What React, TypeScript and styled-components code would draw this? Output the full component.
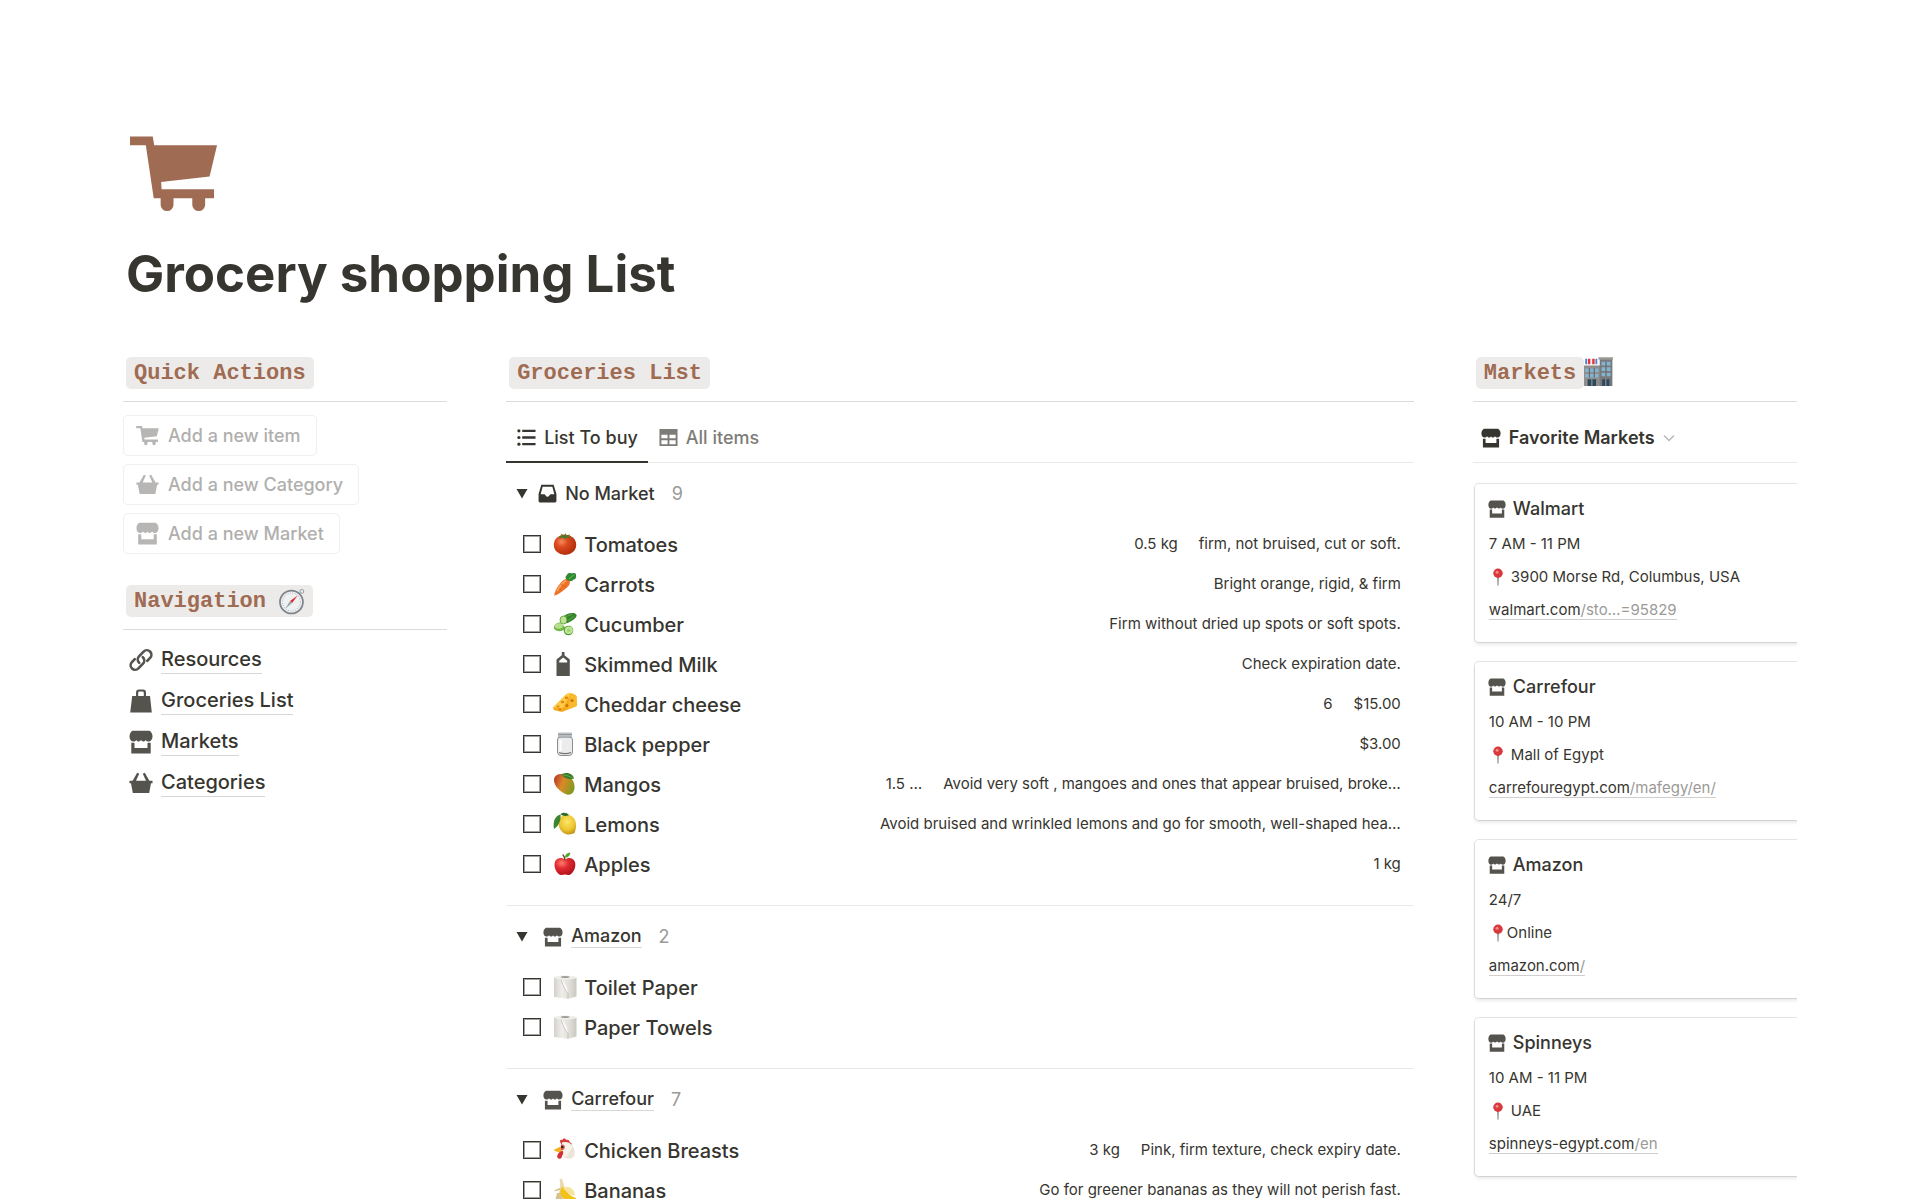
import React from 'react';
import styled, { createGlobalStyle } from 'styled-components';

const ink = '#37352f';
const iconInk = '#55534e';
const muted = '#9b9a97';
const faded = '#b7b6b4';

const GlobalStyle = createGlobalStyle`
  * { box-sizing: border-box; }
  html, body { margin: 0; background: #fff; }
  html { height: 100%; overflow: hidden; }
  body {
    color: ${ink};
    font-family: Inter, "Liberation Sans", sans-serif;
    font-size: 16px;
  }
  h1, h2, h3, p, ul { margin: 0; padding: 0; }
  ul { list-style: none; }
  svg { display: block; flex: none; }
`;

/* ---------- solid icons ---------- */

type IconProps = { size: number; color?: string };

const CartIcon = ({ size, color = iconInk }: IconProps) => (
  <svg width={size} height={size} viewBox="0 0 90 90" fill={color} aria-hidden="true">
    <path d="M1 7.500h23l1.500 9H89l-7.500 31.500-49 5.500.5 7.500h53v9H25l-8-53.500H1z" />
    <path d="M32 68h13v8.500a6.500 6.500 0 0 1-13 0zM64 68h13v8.500a6.500 6.500 0 0 1-13 0z" />
  </svg>
);

const BasketIcon = ({ size, color = iconInk }: IconProps) => (
  <svg width={size} height={size} viewBox="0 0 24 24" fill={color} aria-hidden="true">
    <path d="M.5 9.800h3.100L8.200 1.800l2 .9-3.200 7.100h10l-3.200-7.100 2-.9 4.600 8h3.100v2.500h-1.500L20.200 22H3.800L2 12.300H.5z" />
  </svg>
);

const StoreIcon = ({ size, color = iconInk }: IconProps) => (
  <svg width={size} height={size} viewBox="0 0 24 24" fill={color} aria-hidden="true">
    <path d="M3.500.8h17c2 1.300 3 3.300 3 5.700 0 2.900-1.600 5-3.900 5-1.300 0-2.300-.7-2.800-1.600-.5.800-1.400 1.500-2.500 1.500s-1.900-.7-2.300-1.600c-.4.900-1.200 1.600-2.300 1.600s-2-.7-2.500-1.500c-.5.900-1.500 1.600-2.800 1.600C2 11.500.5 9.400.5 6.500c0-2.400 1-4.400 3-5.700z" />
    <path d="M2.300 12.800h2.600c.4 0 .6.200.6.600V18h13v-4.600c0-.4.200-.6.600-.6h2.600v10.700H2.300z" />
  </svg>
);

const BagIcon = ({ size }: IconProps) => (
  <svg width={size} height={size} viewBox="0 0 24 24" fill={iconInk} aria-hidden="true">
    <path d="M7 7V3.500A3 3 0 0 1 10 .5h4a3 3 0 0 1 3 3V7h4l1.800 16.500H1.200L3.200 7zm2.200 0h5.600V4a1.400 1.400 0 0 0-1.400-1.400h-2.800A1.400 1.400 0 0 0 9.200 4z" />
  </svg>
);

const LinkIcon = ({ size }: IconProps) => (
  <svg
    width={size}
    height={size}
    viewBox="0 0 24 24"
    fill="none"
    stroke={iconInk}
    strokeWidth="2.600"
    strokeLinecap="round"
    aria-hidden="true"
  >
    <path d="M10.200 14.800a4.600 4.600 0 0 1-.2-6.500l4.600-4.700a4.500 4.500 0 0 1 6.500 6.300l-2.900 3" />
    <path d="M13.800 9.200a4.600 4.600 0 0 1 .2 6.500l-4.600 4.700a4.500 4.500 0 0 1-6.500-6.300l2.900-3" />
  </svg>
);

const ListIcon = ({ size, color }: IconProps) => (
  <svg width={size} height={size} viewBox="0 0 20 20" fill={color} aria-hidden="true">
    <circle cx="2" cy="3" r="1.700" />
    <circle cx="2" cy="10" r="1.700" />
    <circle cx="2" cy="17" r="1.700" />
    <path d="M5.500 1.800h14v2.400h-14zM5.500 8.800h14v2.400h-14zM5.500 15.800h14v2.400h-14z" />
  </svg>
);

const TableIcon = ({ size, color }: IconProps) => (
  <svg width={size} height={size} viewBox="0 0 20 20" fill={color} fillRule="evenodd" aria-hidden="true">
    <path d="M.5 1h19v18H.5zM2.500 7v3.800h6.500V7zM11 7v3.800h6.500V7zM2.500 12.800V17h6.500v-4.200zM11 12.800V17h6.500v-4.200z" />
  </svg>
);

const InboxIcon = ({ size }: IconProps) => (
  <svg width={size} height={size} viewBox="0 0 20 20" fill={ink} fillRule="evenodd" aria-hidden="true">
    <path d="M3.500.8h13l2.900 9.700V18a1.400 1.400 0 0 1-1.400 1.400H2A1.400 1.400 0 0 1 .6 18v-7.500zm1.400 2L2.800 10.800h3.800c.6 0 .9.300 1.100.9a2.400 2.400 0 0 0 4.600 0c.2-.6.500-.9 1.100-.9h3.800L15.100 2.800z" />
  </svg>
);

const Chevron = () => (
  <svg width="12" height="12" viewBox="0 0 12 12" fill="none" stroke="#b9b8b5" strokeWidth="1.500" aria-hidden="true">
    <path d="M1 3.500l5 5 5-5" />
  </svg>
);

const Triangle = () => (
  <svg width="12" height="10" viewBox="0 0 12 10" fill={ink} aria-hidden="true">
    <path d="M.5 0h11L6 9.500z" />
  </svg>
);

/* ---------- picture icons ---------- */

const art: Record<string, React.ReactNode> = {
  tomato: (
    <>
      <defs>
        <radialGradient id="tomato" cx=".35" cy=".35" r=".75">
          <stop offset="0" stopColor="#f58a5c" />
          <stop offset=".35" stopColor="#dd4a20" />
          <stop offset="1" stopColor="#a92a08" />
        </radialGradient>
      </defs>
      <ellipse cx="12" cy="12.800" rx="11.200" ry="10.200" fill="url(#tomato)" />
      <path d="M6 4l3.500.4L7.500 1.500l4 2L12.300.8l.9 2.900 4-1.500-1.900 2.500 2.500 1.500-4.300-.4-1.800 1.400-1.500-1.700-3.400.9z" fill="#4c7a28" />
    </>
  ),
  carrot: (
    <>
      <path d="M1.200 23.500C1.500 18 9 7 13.500 7S17.500 12 15 14.500C11 18.500 4 23.500 1.200 23.500z" fill="#ee722a" />
      <path d="M4 19c3-5 6-8.500 9-10.500" stroke="#f9a25a" strokeWidth="1.600" fill="none" />
      <path d="M8 12.500l2.500 1.500M6 17l2 1M11.500 14l1.500 1.500" stroke="#cc5717" strokeWidth=".8" />
      <path d="M14 8c-2-2-2-4 0-5 .5-2 3-2.500 4.500-1.500C21 .5 23.500 1 23 3.500c.7 2-.5 4-2.500 4-1 1.800-3 2-4.500 1.200z" fill="#2f8a33" />
      <path d="M16 7l5-4.500" stroke="#6dbb52" />
    </>
  ),
  cucumber: (
    <>
      <path d="M8.500 6C12 2 19 0 22 1.500s1.500 4-2 6.500-6 3.500-8.500 3S7 8 8.500 6z" fill="#35852a" />
      <path d="M13 4.500l6-2.200M15 8.500l6-4" stroke="#68b14b" strokeWidth=".8" />
      <ellipse cx="10.500" cy="8" rx="3.500" ry="4" fill="#bfe295" stroke="#4c9835" strokeWidth=".8" />
      <path d="M1 16.500c-1-3 3-6.500 6-6l6 5.500c-2 3-9 5-12 .5z" fill="#6fb84b" />
      <ellipse cx="5.800" cy="14" rx="4" ry="2.800" fill="#b6df88" />
      <circle cx="15.500" cy="18.500" r="4.800" fill="#4f9d38" />
      <ellipse cx="15.800" cy="18.300" rx="4" ry="3.800" fill="#c2e69a" />
      <circle cx="15.800" cy="18.300" r="1.900" fill="#a5d577" />
    </>
  ),
  milk: (
    <path
      fillRule="evenodd"
      fill={iconInk}
      d="M8.800 0h2.700v3.300l5.300 4.200V24H3.500V7.500l5.300-4.200zM6.200 10.500h8V8.700L10.200 5.600l-4 3.100z"
    />
  ),
  cheese: (
    <>
      <path d="M0 15.500L13.500 2c3.500-1.500 7.500-.5 10 2.300l.3 9.700L9 20 .8 18z" fill="#f7a91d" />
      <path d="M0 15.500L13.500 2c1.500-.6 3-.8 4.500-.6L10 16z" fill="#fdcb45" />
      <path d="M18 1.400c2.200.3 4.200 1.400 5.500 2.900l.3 9.700L14 18z" fill="#f9b92c" />
      <ellipse cx="13.500" cy="5.800" rx="1.700" ry="1.200" fill="#de8413" />
      <ellipse cx="9.500" cy="10" rx="1.700" ry="1.300" fill="#de8413" />
      <ellipse cx="5" cy="14.500" rx="1.500" ry=".9" fill="#de8413" />
      <circle cx="14" cy="13.500" r="1.500" fill="#d0720d" />
      <circle cx="19" cy="8.500" r="1.600" fill="#d0720d" />
      <circle cx="7" cy="17.500" r=".9" fill="#c9680b" />
    </>
  ),
  jar: (
    <>
      <rect x="4.500" y="4.500" width="15" height="19" rx="3.500" fill="#ececec" stroke="#8b8d8e" />
      <path d="M7.500 8v11" stroke="#fff" strokeWidth="2" />
      <path d="M6 20.500c3 1.500 9 1.500 12 0" stroke="#747677" fill="none" strokeWidth="1.200" />
      <rect x="5" y=".5" width="14" height="4.500" rx="1" fill="#b9bfc3" />
      <path d="M5 2.500h14M5.500 5.300h13" stroke="#878d91" strokeWidth=".8" />
    </>
  ),
  mango: (
    <>
      <defs>
        <linearGradient id="mango" x1="0" y1=".2" x2="1" y2=".6">
          <stop offset="0" stopColor="#b93a2b" />
          <stop offset=".45" stopColor="#dc8a28" />
          <stop offset="1" stopColor="#7f9a1d" />
        </linearGradient>
      </defs>
      <path d="M1 7.500C1.500 2.500 7 1 12 2.500 18.500 4.500 22 10 21.500 16c-.4 5-4 7.500-7.500 6.500C9 21 .3 14.500 1 7.500z" fill="url(#mango)" />
      <path d="M8.500 2.500C12 0 19.500.3 21 6.500c-4 1.500-10 .5-12.500-4z" fill="#3c7d2c" />
      <path d="M10 3c4 .3 7 1.500 10 3.200" stroke="#74aa55" strokeWidth=".8" fill="none" />
    </>
  ),
  lemon: (
    <>
      <defs>
        <radialGradient id="lemon" cx=".5" cy=".35" r=".7">
          <stop offset="0" stopColor="#fae768" />
          <stop offset=".6" stopColor="#ecc531" />
          <stop offset="1" stopColor="#b98d14" />
        </radialGradient>
      </defs>
      <path d="M5.500 9.500c1-5.500 6-7.500 10.500-6.500s7.500 5.500 7 11.500c-.2 2.500-.8 4.700-1.500 6.500-2 .8-5 2-8 1.200C8.500 21 4.800 15 5.500 9.500z" fill="url(#lemon)" />
      <path d="M7.500 2.500C2.500 3.500-.5 9 1 17 6 13.500 8 8 7.500 2.500z" fill="#3c8431" />
      <path d="M7.500 2.300C9.500.3 13.500.2 16 3c-3 1.400-6 1.200-8.500-.7z" fill="#2f6b27" />
    </>
  ),
  apple: (
    <>
      <defs>
        <radialGradient id="apple" cx=".35" cy=".3" r=".8">
          <stop offset="0" stopColor="#ff7d70" />
          <stop offset=".4" stopColor="#e12b30" />
          <stop offset="1" stopColor="#a80f1a" />
        </radialGradient>
      </defs>
      <path d="M12 7.500c3-2.500 7.500-2 9.500 1.500 2.500 5-1 12-4.500 13.700-1.800.8-3.500-.2-5-.2s-3.200 1-5 .2C3.500 21-.2 14 2.300 9 4.300 5.500 9 5 12 7.500z" fill="url(#apple)" />
      <path d="M12 8.500c0-2.500-.8-4.500-2.300-6" stroke="#6b4226" strokeWidth="1.300" fill="none" />
      <path d="M12 5.500C12 2.500 14 .7 17.300.5 17.300 3.500 15 5.700 12 5.500z" fill="#55a332" />
    </>
  ),
  paper: (
    <>
      <defs>
        <linearGradient id="paper">
          <stop offset="0" stopColor="#d3d1ca" />
          <stop offset=".35" stopColor="#efeeea" />
          <stop offset=".7" stopColor="#dfddd7" />
          <stop offset="1" stopColor="#cac7bf" />
        </linearGradient>
      </defs>
      <path d="M1 2.500h22.500v19L15 23.800 1 22z" fill="url(#paper)" />
      <path d="M9 5.500c2.500 2 5.500 7 6 13l-3-4.500z" fill="#fff" />
      <path d="M8 4.500c.5 4 3.500 7.500 4.500 10.500l2.500 3.500V23.800" stroke="#b9b6ae" strokeWidth=".7" fill="none" />
      <ellipse cx="12.200" cy="2.500" rx="11.200" ry="2" fill="#efeeea" />
      <ellipse cx="12.200" cy="2" rx="4.500" ry=".8" fill="#85827b" />
    </>
  ),
  chicken: (
    <>
      <path d="M7.500 4.500C6 2.500 8 1 9.500 2 10-.2 13 .2 13 2c2-1 4 .3 3.500 2.300 2 .2 2.500 2 2 3.500L9 9z" fill="#d93a3c" />
      <path d="M9 4.800c6-2.500 11.500 1.200 12.500 8.200.7 5-1.500 7.500-5.500 7.500-4.500 0-7-2-7.500-6z" fill="#ece4d8" />
      <path d="M9 4.800c4-1.300 8 0 10.500 4L13 19c-3-.5-4.300-2-4.500-4z" fill="#f8f3ea" />
      <path d="M7.500 8.500L.7 12c2 1.800 5 2.500 8 2z" fill="#f5b21b" />
      <path d="M6 14.500c-2 3-2.500 5-.5 6s3.500-.5 3.500-2.500c1.500-2 1.500-3.500.5-5.500z" fill="#d33034" />
      <path d="M7.800 7.500c1.500-1.700 4-1 4 1.500s-2 3.800-4 3z" fill="#e2595a" />
      <circle cx="9.300" cy="9" r="1.300" fill="#2c211c" />
    </>
  ),
  banana: (
    <>
      <path d="M6.500 1L9 .7l3 9.800-1 11.500-5 1.500C5 16 8.500 8 6.500 1z" fill="#ead9ad" />
      <path d="M7.500 10c-3 .5-5.500 1.500-6.500 3.500l6-1.500zM4 15l-2 8 6 .5 3-9z" fill="#d8c28b" />
      <path d="M9 9c4 0 4.500 8.500 14 11l-.5 2.500C15 25 6 20 7.500 12z" fill="#f3c218" />
      <path d="M10 9.500c5-2.500 11.500 1 12 8-4 .5-9-3-12-8z" fill="#f8e2a0" />
    </>
  ),
  pin: (
    <>
      <path d="M10.800 10h2.400l-.5 13c-.2 1-1.200 1-1.400 0z" fill="#8e8b88" />
      <circle cx="12" cy="7" r="6.300" fill="#d9383c" />
      <circle cx="10.800" cy="5.500" r="2" fill="#f28b8b" />
    </>
  ),
  compass: (
    <>
      <circle cx="11.500" cy="12" r="10.600" fill="#eef0f1" stroke="#7d858b" strokeWidth="1.600" />
      <circle cx="11.500" cy="12" r="8.300" fill="none" stroke="#b4b9bd" strokeDasharray=".8 1.400" />
      <path d="M17.200 6l-7 5 1.900 1.900z" fill="#e0262f" />
      <path d="M5.800 18.300l6.300-5.400-1.900-1.900z" fill="#9aa1a6" />
      <rect x="19.500" y=".6" width="3.200" height="3.200" rx=".8" fill="#eee" stroke="#8a9296" strokeWidth=".8" />
    </>
  ),
  building: (
    <>
      <path d="M0 7h14v17H0z" fill="#8f8e8c" />
      <path d="M13 1h10.500v23H13z" fill="#77797b" />
      <path d="M12 .2h12v2H12z" fill="#9d9a96" />
      <path d="M1 9.500h11v3H1zM1 14h11v3H1zM14.500 4h7.500v3h-7.500zM14.500 8.500h7.500v3h-7.500zM14.500 13h7.500v3h-7.500z" fill="#83b4d0" />
      <path d="M4.500 9v8M8.500 9v8M18.200 4v12" stroke="#67696b" />
      <path d="M3 18.500h7V24H3zM15 18.500h6V24h-6z" fill="#2c4a5e" />
      <path d="M6.500 18v6M18 18v6" stroke="#8f8e8c" />
      <path d="M1 1.500h10V6H1z" fill="#f4f1f0" />
      <path d="M1 1.500h1.500V6H1zM9.500 1.500H11V6H9.500z" fill="#4c84d8" />
      <path d="M3.200 1.500h2V6h-2zM6.800 1.500h2V6h-2z" fill="#e0383f" />
    </>
  ),
};

const Picture = ({ name, size }: { name: string; size: number }) => (
  <svg width={size} height={size} viewBox="0 0 24 24" aria-hidden="true">
    {art[name]}
  </svg>
);

/* ---------- layout ---------- */

const Page = styled.main`
  padding: 129px 123px 0;
`;

const PageIcon = styled.div`
  padding-left: 6px;
`;

const Title = styled.h1`
  margin-top: 24px;
  padding-left: 3px;
  font-size: 51px;
  line-height: 64px;
  font-weight: 700;
`;

const Columns = styled.div`
  display: grid;
  grid-template-columns: minmax(0, 5fr) minmax(0, 14fr) minmax(0, 5fr);
  gap: 59px;
  margin-top: 51px;
`;

const Column = styled.section`
  min-width: 0;
`;

const Heading = styled.div<{ $spaced?: boolean }>`
  display: flex;
  align-items: flex-start;
  margin-top: ${(p) => (p.$spaced ? '31px' : '0')};
  padding: 0 3px 12px;
  border-bottom: 1px solid #dcdbd9;
`;

const Pill = styled.h2`
  display: flex;
  align-items: center;
  gap: 13px;
  height: 32px;
  padding: 2px 8px 0;
  border-radius: 5px;
  background: #edebe9;
  color: #9f6b53;
  font: 700 22px/30px "Liberation Mono", monospace;
`;

const Actions = styled.div`
  display: flex;
  flex-direction: column;
  align-items: flex-start;
  gap: 8px;
  padding-top: 13px;
`;

const ActionButton = styled.button`
  display: flex;
  align-items: center;
  gap: 9px;
  height: 41px;
  padding: 0 15px 0 12px;
  border: 1px solid #efefee;
  border-radius: 5px;
  background: #fff;
  color: #b0afad;
  font: 500 18px/24px Inter, sans-serif;
`;

const NavList = styled.ul`
  padding: 9px 0 0 6px;
`;

const NavItem = styled.li`
  display: flex;
  align-items: center;
  gap: 8px;
  height: 41px;
`;

const NavLink = styled.a`
  border-bottom: 1px solid #d8d7d5;
  color: ${ink};
  font-size: 20px;
  line-height: 27px;
  font-weight: 500;
  text-decoration: none;
`;

const Tabs = styled.div`
  display: flex;
  height: 61px;
  padding-top: 12px;
  border-bottom: 1px solid #e9e9e7;
`;

const Tab = styled.button<{ $active?: boolean }>`
  display: flex;
  align-items: center;
  gap: 8px;
  height: 49px;
  padding: 0 10px 0 11px;
  border: 0;
  border-bottom: 2px solid ${(p) => (p.$active ? ink : 'transparent')};
  background: none;
  color: ${(p) => (p.$active ? ink : '#7d7c78')};
  font: 500 18px/24px Inter, sans-serif;
`;

const Group = styled.section`
  padding-bottom: 21px;
  border-bottom: 1px solid #e9e9e7;
`;

const GroupHeader = styled.div`
  display: flex;
  align-items: center;
  height: 61px;
  padding-left: 10px;
`;

const Toggle = styled.button`
  display: flex;
  padding: 0;
  border: 0;
  background: none;
`;

const GroupIcon = styled.span<{ $linked?: boolean }>`
  margin-left: ${(p) => (p.$linked ? '15px' : '10px')};
`;

const GroupName = styled.h3<{ $linked?: boolean }>`
  margin-left: 8px;
  border-bottom: ${(p) => (p.$linked ? '1px solid #d8d7d5' : '0')};
  font-size: 18px;
  line-height: 22px;
  font-weight: 500;
`;

const Count = styled.span`
  margin-left: 17px;
  color: ${muted};
  font-size: 18px;
  line-height: 22px;
`;

const Row = styled.li`
  display: flex;
  align-items: center;
  height: 40px;
  padding: 0 13px 0 17px;
`;

const ItemLabel = styled.label`
  display: flex;
  align-items: center;
  font-size: 20px;
  line-height: 26px;
  font-weight: 500;
  white-space: nowrap;
`;

const Checkbox = styled.input`
  appearance: none;
  width: 18px;
  height: 18px;
  margin: 0 12px 0 0;
  border: 1px solid ${ink};
  box-shadow: inset 0 0 0 1px #a3a29f;
`;

const ItemName = styled.span`
  padding: 2px 0 0 7px;
`;

const Notes = styled.div`
  display: flex;
  flex: 1;
  justify-content: flex-end;
  gap: 21px;
  min-width: 0;
  font-size: 15px;
  line-height: 20px;
  white-space: nowrap;
`;

const ViewButton = styled.button`
  display: flex;
  align-items: center;
  gap: 8px;
  width: 100%;
  height: 61px;
  padding: 12px 0 0 8px;
  border: 0;
  border-bottom: 1px solid #e9e9e7;
  background: none;
  color: ${ink};
  font: 600 18px/24px Inter, sans-serif;
`;

const Cards = styled.ul`
  display: flex;
  flex-direction: column;
  gap: 20px;
  padding: 21px 0 20px 2px;
  overflow: hidden;
`;

const Card = styled.li`
  height: 158px;
  margin-right: -8px;
  padding: 12px 13px;
  border-radius: 4px;
  box-shadow: 0 0 0 1px rgba(15, 15, 15, 0.1), 0 2px 4px rgba(15, 15, 15, 0.12);
`;

const CardTitle = styled.h3`
  display: flex;
  align-items: center;
  gap: 7px;
  font-size: 18px;
  line-height: 25px;
  font-weight: 500;
`;

const CardLine = styled.p<{ $tight?: boolean }>`
  display: flex;
  align-items: center;
  gap: ${(p) => (p.$tight ? '0' : '4px')};
  height: 20px;
  margin-top: 13px;
  padding-left: 1px;
  font-size: 15px;
  line-height: 20px;
  white-space: nowrap;
`;

const SiteLink = styled.a`
  border-bottom: 1px solid #d0cfcd;
  color: ${ink};
  line-height: 18px;
  text-decoration: none;
  span { color: ${muted}; }
`;

/* ---------- data ---------- */

type Item = { name: string; icon: string; notes?: string[] };
type MarketGroup = { name: string; count: number; linked?: boolean; items: Item[] };

const groups: MarketGroup[] = [
  {
    name: 'No Market',
    count: 9,
    items: [
      { name: 'Tomatoes', icon: 'tomato', notes: ['0.5 kg', 'firm, not bruised, cut or soft.'] },
      { name: 'Carrots', icon: 'carrot', notes: ['Bright orange, rigid, & firm'] },
      { name: 'Cucumber', icon: 'cucumber', notes: ['Firm without dried up spots or soft spots.'] },
      { name: 'Skimmed Milk', icon: 'milk', notes: ['Check expiration date.'] },
      { name: 'Cheddar cheese', icon: 'cheese', notes: ['6', '$15.00'] },
      { name: 'Black pepper', icon: 'jar', notes: ['$3.00'] },
      { name: 'Mangos', icon: 'mango', notes: ['1.5 …', 'Avoid very soft , mangoes and ones that appear bruised, broke…'] },
      { name: 'Lemons', icon: 'lemon', notes: ['Avoid bruised and wrinkled lemons and go for smooth, well-shaped hea…'] },
      { name: 'Apples', icon: 'apple', notes: ['1 kg'] },
    ],
  },
  {
    name: 'Amazon',
    count: 2,
    linked: true,
    items: [
      { name: 'Toilet Paper', icon: 'paper' },
      { name: 'Paper Towels', icon: 'paper' },
    ],
  },
  {
    name: 'Carrefour',
    count: 7,
    linked: true,
    items: [
      { name: 'Chicken Breasts', icon: 'chicken', notes: ['3 kg', 'Pink, firm texture, check expiry date.'] },
      { name: 'Bananas', icon: 'banana', notes: ['Go for greener bananas as they will not perish fast.'] },
    ],
  },
];

const markets = [
  { name: 'Walmart', hours: '7 AM - 11 PM', place: '3900 Morse Rd, Columbus, USA', host: 'walmart.com', path: '/sto…=95829' },
  { name: 'Carrefour', hours: '10 AM - 10 PM', place: 'Mall of Egypt', host: 'carrefouregypt.com', path: '/mafegy/en/' },
  { name: 'Amazon', hours: '24/7', place: 'Online', host: 'amazon.com', path: '/', tight: true },
  { name: 'Spinneys', hours: '10 AM - 11 PM', place: 'UAE', host: 'spinneys-egypt.com', path: '/en' },
];

export default function App() {
  return (
    <>
      <GlobalStyle />
      <Page>
        <PageIcon>
          <CartIcon size={89} color="#9f6b53" />
        </PageIcon>
        <Title>Grocery shopping List</Title>

        <Columns>
          <Column>
            <Heading>
              <Pill>Quick Actions</Pill>
            </Heading>
            <Actions>
              <ActionButton>
                <CartIcon size={23} color={faded} />
                Add a new item
              </ActionButton>
              <ActionButton>
                <BasketIcon size={23} color={faded} />
                Add a new Category
              </ActionButton>
              <ActionButton>
                <StoreIcon size={23} color={faded} />
                Add a new Market
              </ActionButton>
            </Actions>

            <Heading $spaced>
              <Pill>
                Navigation
                <Picture name="compass" size={26} />
              </Pill>
            </Heading>
            <NavList>
              <NavItem>
                <LinkIcon size={24} />
                <NavLink href="#resources">Resources</NavLink>
              </NavItem>
              <NavItem>
                <BagIcon size={24} />
                <NavLink href="#groceries">Groceries List</NavLink>
              </NavItem>
              <NavItem>
                <StoreIcon size={24} />
                <NavLink href="#markets">Markets</NavLink>
              </NavItem>
              <NavItem>
                <BasketIcon size={24} />
                <NavLink href="#categories">Categories</NavLink>
              </NavItem>
            </NavList>
          </Column>

          <Column>
            <Heading>
              <Pill>Groceries List</Pill>
            </Heading>
            <Tabs>
              <Tab $active>
                <ListIcon size={19} color={ink} />
                List To buy
              </Tab>
              <Tab>
                <TableIcon size={19} color="#7d7c78" />
                All items
              </Tab>
            </Tabs>
            {groups.map((group) => (
              <Group key={group.name}>
                <GroupHeader>
                  <Toggle aria-label={`Toggle ${group.name}`}>
                    <Triangle />
                  </Toggle>
                  <GroupIcon $linked={group.linked}>
                    {group.linked ? <StoreIcon size={20} /> : <InboxIcon size={19} />}
                  </GroupIcon>
                  <GroupName $linked={group.linked}>{group.name}</GroupName>
                  <Count>{group.count}</Count>
                </GroupHeader>
                <ul>
                  {group.items.map((item) => (
                    <Row key={item.name}>
                      <ItemLabel>
                        <Checkbox type="checkbox" />
                        <Picture name={item.icon} size={24} />
                        <ItemName>{item.name}</ItemName>
                      </ItemLabel>
                      <Notes>
                        {item.notes?.map((note) => <span key={note}>{note}</span>)}
                      </Notes>
                    </Row>
                  ))}
                </ul>
              </Group>
            ))}
          </Column>

          <Column>
            <Heading>
              <Pill>Markets</Pill>
              <Picture name="building" size={29} />
            </Heading>
            <ViewButton>
              <StoreIcon size={20} color={ink} />
              Favorite Markets
              <Chevron />
            </ViewButton>
            <Cards>
              {markets.map((market) => (
                <Card key={market.name}>
                  <CardTitle>
                    <StoreIcon size={18} />
                    {market.name}
                  </CardTitle>
                  <CardLine>{market.hours}</CardLine>
                  <CardLine $tight={market.tight}>
                    <Picture name="pin" size={18} />
                    {market.place}
                  </CardLine>
                  <CardLine>
                    <SiteLink href={`#${market.host}`}>
                      {market.host}
                      <span>{market.path}</span>
                    </SiteLink>
                  </CardLine>
                </Card>
              ))}
            </Cards>
          </Column>
        </Columns>
      </Page>
    </>
  );
}
